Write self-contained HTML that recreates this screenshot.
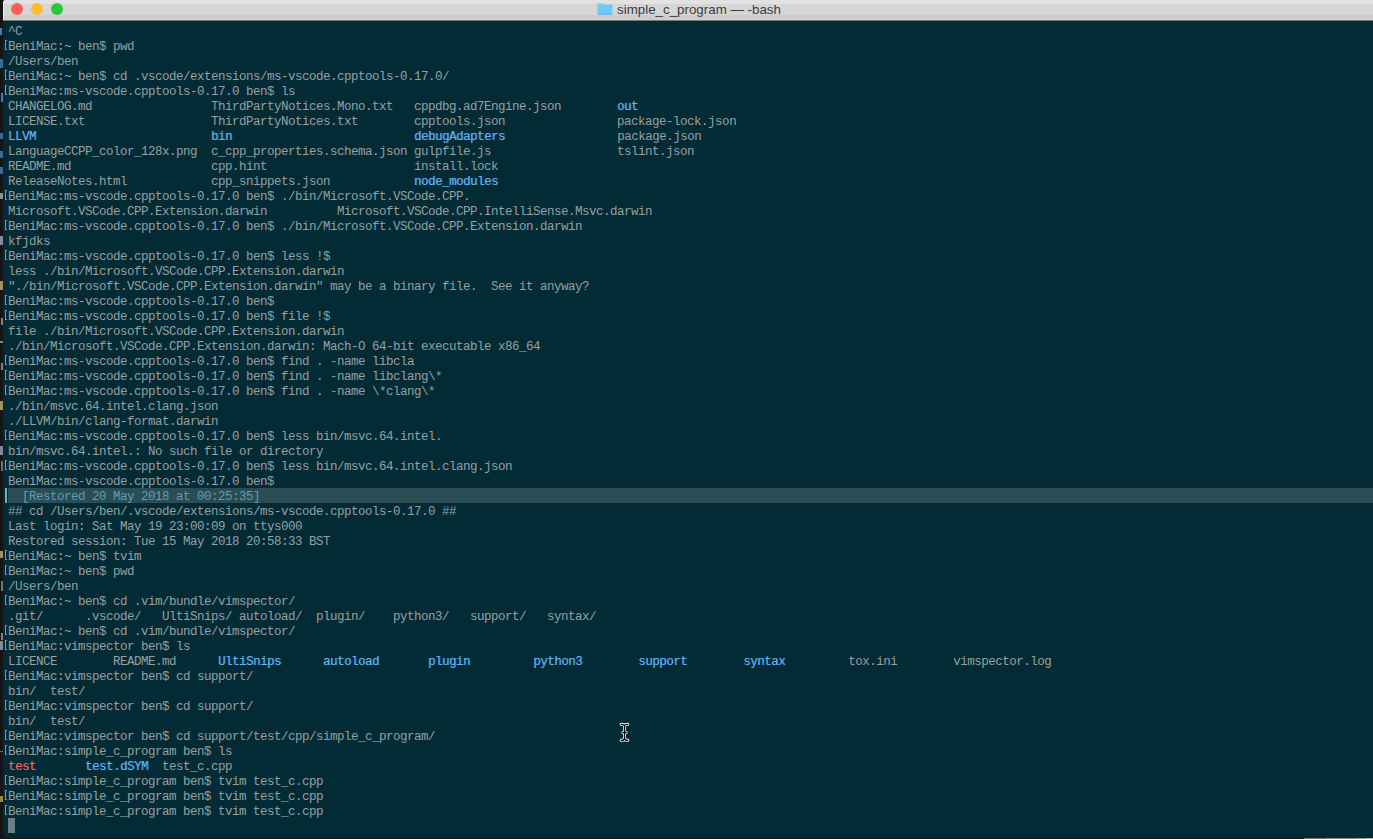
<!DOCTYPE html>
<html><head><meta charset="utf-8">
<style>
html,body{margin:0;padding:0;}
body{width:1373px;height:839px;background:#151515;position:relative;overflow:hidden;}
.win{position:absolute;left:3px;top:0;width:1370px;height:838px;background:#032b36;border-radius:2px 0 0 5px;overflow:hidden;}
.tb{position:absolute;left:0;top:0;width:100%;height:21px;background:linear-gradient(#e2e2e2 0,#e1e1e1 4px,#d6d6d6 4px,#d5d5d5 15px,#cdcdcd 15px,#cccccc 19px,#d1d1d1 19px,#d1d1d1 20px);border-radius:2px 0 0 0;box-shadow:inset 1px 0 0 rgba(255,255,255,.55);}
.tb:after{content:"";position:absolute;left:0;right:0;top:20px;height:1px;background:#7a7874;}
.dot{position:absolute;top:3px;width:12px;height:12px;border-radius:50%;}
.title{position:absolute;left:614px;top:1.5px;height:20px;line-height:20px;font:13.35px "Liberation Sans",sans-serif;color:#3c3c3c;white-space:pre;}
.folder{position:absolute;left:594px;top:3px;width:16px;height:12px;}
.row{position:absolute;left:5px;height:15px;line-height:15px;white-space:pre;font-family:"Liberation Mono",monospace;font-size:12.5px;letter-spacing:-0.5px;color:#93a1a1;padding-top:2px;}
.row b{font-weight:normal;}
.d{text-shadow:0.6px 0 0 rgba(98,179,245,0.45);}
.r{text-shadow:0.6px 0 0 rgba(255,99,80,0.45);}
.d{color:#62b3f5;}
.r{color:#ff6350;}
.br{position:absolute;left:2px;width:1px;height:8px;border:1px solid #66a2bd;border-right:0;margin-top:2px;}
.band{position:absolute;left:5px;right:0;height:15px;background:#2a4c54;}
.bar{position:absolute;left:2px;width:2px;height:15px;background:#72adc6;}
.rs{color:#5d9db5;}
.cur{position:absolute;left:5px;top:818px;width:7px;height:15px;background:#6a7e83;}
</style></head><body>
<div style="position:absolute;left:0;top:0;width:3px;height:839px;">
<div style="position:absolute;left:0;top:28px;width:2px;height:7px;background:#3f7fc0;"></div>
<div style="position:absolute;left:0;top:59px;width:3px;height:9px;background:#3f7fc0;opacity:.8"></div>
<div style="position:absolute;left:1px;top:93px;width:2px;height:9px;background:#3f7fc0;"></div>
<div style="position:absolute;left:0;top:133px;width:3px;height:6px;background:#3f7fc0;opacity:.8"></div>
<div style="position:absolute;left:0;top:151px;width:3px;height:7px;background:#3f7fc0;opacity:.8"></div>
<div style="position:absolute;left:0;top:167px;width:3px;height:7px;background:#3f7fc0;opacity:.8"></div>
<div style="position:absolute;left:0;top:193px;width:3px;height:6px;background:#b0b0b0;opacity:.8"></div>
<div style="position:absolute;left:0;top:236px;width:3px;height:9px;background:#a0a8b0;opacity:.8"></div>
<div style="position:absolute;left:0;top:281px;width:3px;height:9px;background:#c8b070;opacity:.8"></div>
<div style="position:absolute;left:1px;top:318px;width:2px;height:7px;background:#b0b0b0;opacity:.7"></div>
<div style="position:absolute;left:0;top:341px;width:3px;height:2px;background:#b0b0b0;opacity:.7"></div>
<div style="position:absolute;left:1px;top:363px;width:2px;height:7px;background:#b0b0b0;opacity:.7"></div>
<div style="position:absolute;left:0;top:401px;width:3px;height:9px;background:#c8b070;opacity:.8"></div>
<div style="position:absolute;left:0;top:446px;width:3px;height:9px;background:#a0a8b0;opacity:.8"></div>
<div style="position:absolute;left:1px;top:461px;width:2px;height:10px;background:#a0a8b0;opacity:.6"></div>
<div style="position:absolute;left:0;top:551px;width:3px;height:7px;background:#c8b070;opacity:.8"></div>
<div style="position:absolute;left:1px;top:581px;width:2px;height:10px;background:#b0b0b0;opacity:.6"></div>
<div style="position:absolute;left:1px;top:633px;width:2px;height:7px;background:#b0b0b0;opacity:.7"></div>
<div style="position:absolute;left:0;top:641px;width:3px;height:9px;background:#a0a8b0;opacity:.8"></div>
<div style="position:absolute;left:0;top:751px;width:3px;height:1px;background:#707070;"></div>
<div style="position:absolute;left:0;top:796px;width:3px;height:6px;background:#c8a040;opacity:.8"></div>
</div>
<div class="win">
<div class="tb">
<div class="dot" style="left:8px;background:#fd5e57;"></div>
<div class="dot" style="left:28px;background:#febb2e;"></div>
<div class="dot" style="left:48px;background:#28c73f;"></div>
<svg class="folder" viewBox="0 0 16 12"><path d="M0.5 1.2 Q0.5 0.3 1.4 0.3 H5.6 L6.8 1.5 H14.6 Q15.5 1.5 15.5 2.4 V11 Q15.5 11.7 14.8 11.7 H1.2 Q0.5 11.7 0.5 11 Z" fill="#6ccaf5"/><path d="M1 11.2 H15" stroke="#5aaed6" stroke-width="0.8"/><path d="M1.2 1.2 H5.4" stroke="#90dcfb" stroke-width="0.8"/></svg>
<div class="title">simple_c_program — -bash</div>
</div>
<div class="row" style="top:23px">^C</div><div class="br" style="top:38px"></div><div class="row" style="top:38px">BeniMac:~ ben$ pwd</div><div class="row" style="top:53px">/Users/ben</div><div class="br" style="top:68px"></div><div class="row" style="top:68px">BeniMac:~ ben$ cd .vscode/extensions/ms-vscode.cpptools-0.17.0/</div><div class="br" style="top:83px"></div><div class="row" style="top:83px">BeniMac:ms-vscode.cpptools-0.17.0 ben$ ls</div><div class="row" style="top:98px">CHANGELOG.md                 ThirdPartyNotices.Mono.txt   cppdbg.ad7Engine.json        <b class="d">out</b></div><div class="row" style="top:113px">LICENSE.txt                  ThirdPartyNotices.txt        cpptools.json                package-lock.json</div><div class="row" style="top:128px"><b class="d">LLVM</b>                         <b class="d">bin</b>                          <b class="d">debugAdapters</b>                package.json</div><div class="row" style="top:143px">LanguageCCPP_color_128x.png  c_cpp_properties.schema.json gulpfile.js                  tslint.json</div><div class="row" style="top:158px">README.md                    cpp.hint                     install.lock</div><div class="row" style="top:173px">ReleaseNotes.html            cpp_snippets.json            <b class="d">node_modules</b></div><div class="br" style="top:188px"></div><div class="row" style="top:188px">BeniMac:ms-vscode.cpptools-0.17.0 ben$ ./bin/Microsoft.VSCode.CPP.</div><div class="row" style="top:203px">Microsoft.VSCode.CPP.Extension.darwin          Microsoft.VSCode.CPP.IntelliSense.Msvc.darwin</div><div class="br" style="top:218px"></div><div class="row" style="top:218px">BeniMac:ms-vscode.cpptools-0.17.0 ben$ ./bin/Microsoft.VSCode.CPP.Extension.darwin</div><div class="row" style="top:233px">kfjdks</div><div class="br" style="top:248px"></div><div class="row" style="top:248px">BeniMac:ms-vscode.cpptools-0.17.0 ben$ less !$</div><div class="row" style="top:263px">less ./bin/Microsoft.VSCode.CPP.Extension.darwin</div><div class="row" style="top:278px">&quot;./bin/Microsoft.VSCode.CPP.Extension.darwin&quot; may be a binary file.  See it anyway?</div><div class="br" style="top:293px"></div><div class="row" style="top:293px">BeniMac:ms-vscode.cpptools-0.17.0 ben$</div><div class="br" style="top:308px"></div><div class="row" style="top:308px">BeniMac:ms-vscode.cpptools-0.17.0 ben$ file !$</div><div class="row" style="top:323px">file ./bin/Microsoft.VSCode.CPP.Extension.darwin</div><div class="row" style="top:338px">./bin/Microsoft.VSCode.CPP.Extension.darwin: Mach-O 64-bit executable x86_64</div><div class="br" style="top:353px"></div><div class="row" style="top:353px">BeniMac:ms-vscode.cpptools-0.17.0 ben$ find . -name libcla</div><div class="br" style="top:368px"></div><div class="row" style="top:368px">BeniMac:ms-vscode.cpptools-0.17.0 ben$ find . -name libclang\*</div><div class="br" style="top:383px"></div><div class="row" style="top:383px">BeniMac:ms-vscode.cpptools-0.17.0 ben$ find . -name \*clang\*</div><div class="row" style="top:398px">./bin/msvc.64.intel.clang.json</div><div class="row" style="top:413px">./LLVM/bin/clang-format.darwin</div><div class="br" style="top:428px"></div><div class="row" style="top:428px">BeniMac:ms-vscode.cpptools-0.17.0 ben$ less bin/msvc.64.intel.</div><div class="row" style="top:443px">bin/msvc.64.intel.: No such file or directory</div><div class="br" style="top:458px"></div><div class="row" style="top:458px">BeniMac:ms-vscode.cpptools-0.17.0 ben$ less bin/msvc.64.intel.clang.json</div><div class="row" style="top:473px">BeniMac:ms-vscode.cpptools-0.17.0 ben$</div><div class="band" style="top:488px"></div><div class="bar" style="top:488px"></div><div class="row rs" style="top:488px">  [Restored 20 May 2018 at 00:25:35]</div><div class="row" style="top:503px">## cd /Users/ben/.vscode/extensions/ms-vscode.cpptools-0.17.0 ##</div><div class="row" style="top:518px">Last login: Sat May 19 23:00:09 on ttys000</div><div class="row" style="top:533px">Restored session: Tue 15 May 2018 20:58:33 BST</div><div class="br" style="top:548px"></div><div class="row" style="top:548px">BeniMac:~ ben$ tvim</div><div class="br" style="top:563px"></div><div class="row" style="top:563px">BeniMac:~ ben$ pwd</div><div class="row" style="top:578px">/Users/ben</div><div class="br" style="top:593px"></div><div class="row" style="top:593px">BeniMac:~ ben$ cd .vim/bundle/vimspector/</div><div class="row" style="top:608px">.git/      .vscode/   UltiSnips/ autoload/  plugin/    python3/   support/   syntax/</div><div class="br" style="top:623px"></div><div class="row" style="top:623px">BeniMac:~ ben$ cd .vim/bundle/vimspector/</div><div class="br" style="top:638px"></div><div class="row" style="top:638px">BeniMac:vimspector ben$ ls</div><div class="row" style="top:653px">LICENCE        README.md      <b class="d">UltiSnips</b>      <b class="d">autoload</b>       <b class="d">plugin</b>         <b class="d">python3</b>        <b class="d">support</b>        <b class="d">syntax</b>         tox.ini        vimspector.log</div><div class="br" style="top:668px"></div><div class="row" style="top:668px">BeniMac:vimspector ben$ cd support/</div><div class="row" style="top:683px">bin/  test/</div><div class="br" style="top:698px"></div><div class="row" style="top:698px">BeniMac:vimspector ben$ cd support/</div><div class="row" style="top:713px">bin/  test/</div><div class="br" style="top:728px"></div><div class="row" style="top:728px">BeniMac:vimspector ben$ cd support/test/cpp/simple_c_program/</div><div class="br" style="top:743px"></div><div class="row" style="top:743px">BeniMac:simple_c_program ben$ ls</div><div class="row" style="top:758px"><b class="r">test</b>       <b class="d">test.dSYM</b>  test_c.cpp</div><div class="br" style="top:773px"></div><div class="row" style="top:773px">BeniMac:simple_c_program ben$ tvim test_c.cpp</div><div class="br" style="top:788px"></div><div class="row" style="top:788px">BeniMac:simple_c_program ben$ tvim test_c.cpp</div><div class="br" style="top:803px"></div><div class="row" style="top:803px">BeniMac:simple_c_program ben$ tvim test_c.cpp</div>
<div class="cur"></div>
<svg style="position:absolute;left:616px;top:722px" width="11" height="21" viewBox="0 0 11 21"><path d="M2.2 2.3 Q4.4 2.1 5.5 3.6 Q6.6 2.1 8.8 2.3 M5.5 3.6 V17 M2.2 18.3 Q4.4 18.5 5.5 17 Q6.6 18.5 8.8 18.3 M3.9 10.5 H7.1" fill="none" stroke="#f4f4f4" stroke-width="3" stroke-linecap="round"/><path d="M2.2 2.3 Q4.4 2.1 5.5 3.6 Q6.6 2.1 8.8 2.3 M5.5 3.6 V17 M2.2 18.3 Q4.4 18.5 5.5 17 Q6.6 18.5 8.8 18.3 M3.9 10.5 H7.1" fill="none" stroke="#000" stroke-width="1.3" stroke-linecap="round"/></svg>
</div>
<div style="position:absolute;left:1304px;top:838px;width:69px;height:1px;background:linear-gradient(90deg,#77726c 0,#77726c 23px,#8a8a85 23px,#8a8a85 52px,#8c9a90 52px,#8c9a90 62px,#b0b0b0 62px);"></div>
</body></html>
